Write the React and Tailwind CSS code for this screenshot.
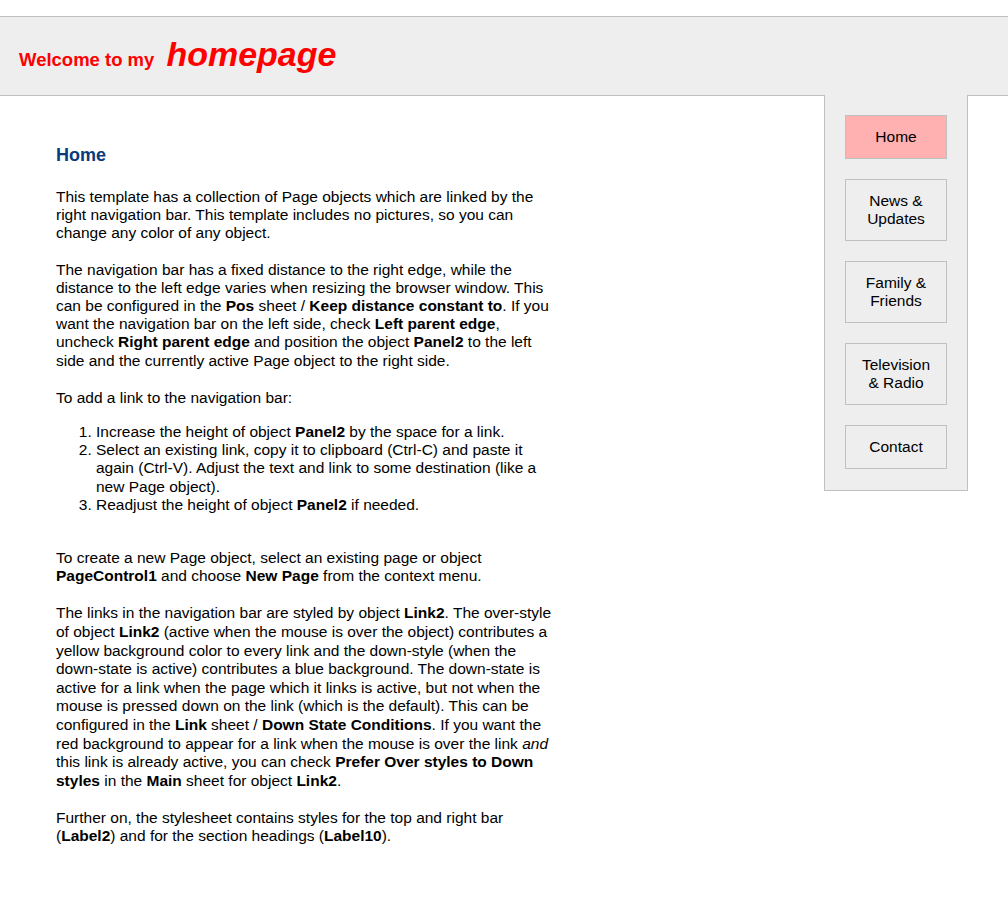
import React from "react";

const navItems = [
  { label: ["Home"], active: true },
  { label: ["News &", "Updates"] },
  { label: ["Family &", "Friends"] },
  { label: ["Television", "& Radio"] },
  { label: ["Contact"] },
];

function NavButton({ label, active }) {
  return (
    <a
      href="#"
      className={`block border border-[#c0c0c0] py-3 text-center leading-[18px] text-black no-underline ${
        active ? "bg-[#ffb0b0]" : "bg-[#eeeeee]"
      }`}
    >
      {label.map((line) => (
        <div key={line}>{line}</div>
      ))}
    </a>
  );
}

export default function App() {
  return (
    <div className="min-h-[920px] bg-white font-['Liberation_Sans',Arial,sans-serif] text-[15.5px] leading-[18.2px] text-black">
      <header className="mt-4 h-20 border-y border-[#c0c0c0] bg-[#eeeeee] pl-[19px] pt-[20px]">
        <div className="flex items-baseline font-bold text-[#ff0000]">
          <span className="text-[18.5px] leading-none">Welcome to my</span>
          <span className="ml-[12px] text-[34px] italic leading-[34px]">homepage</span>
        </div>
      </header>

      <div className="flex justify-between">
        <main className="ml-14 w-[500px] pb-10">
          <h1 className="mt-12 text-[18px] font-bold leading-[22px] text-[#0a3b7c]">Home</h1>

          <p className="mt-[22px]">
            This template has a collection of Page objects which are linked by the right navigation bar. This
            template includes no pictures, so you can change any color of any object.
          </p>

          <p className="mt-[18px]">
            The navigation bar has a fixed distance to the right edge, while the distance to the left edge varies
            when resizing the browser window. This can be configured in the <b>Pos</b> sheet /{" "}
            <b>Keep distance constant to</b>. If you want the navigation bar on the left side, check{" "}
            <b>Left parent edge</b>, uncheck <b>Right parent edge</b> and position the object <b>Panel2</b> to the
            left side and the currently active Page object to the right side.
          </p>

          <p className="mt-[19px]">To add a link to the navigation bar:</p>

          <ol className="mt-4 list-decimal pl-10">
            <li>
              Increase the height of object <b>Panel2</b> by the space for a link.
            </li>
            <li>
              Select an existing link, copy it to clipboard (Ctrl-C) and paste it again (Ctrl-V). Adjust the text
              and link to some destination (like a new Page object).
            </li>
            <li>
              Readjust the height of object <b>Panel2</b> if needed.
            </li>
          </ol>

          <p className="mt-[35px]">
            To create a new Page object, select an existing page or object <b>PageControl1</b> and choose{" "}
            <b>New Page</b> from the context menu.
          </p>

          <p className="mt-[19px] leading-[18.6px]">
            The links in the navigation bar are styled by object <b>Link2</b>. The over-style of object{" "}
            <b>Link2</b> (active when the mouse is over the object) contributes a yellow background color to every
            link and the down-style (when the down-state is active) contributes a blue background. The down-state
            is active for a link when the page which it links is active, but not when the mouse is pressed down on
            the link (which is the default). This can be configured in the <b>Link</b> sheet /{" "}
            <b>Down State Conditions</b>. If you want the red background to appear for a link when the mouse is
            over the link <i>and</i> this link is already active, you can check{" "}
            <b>Prefer Over styles to Down styles</b> in the <b>Main</b> sheet for object <b>Link2</b>.
          </p>

          <p className="mt-[18.4px]">
            Further on, the stylesheet contains styles for the top and right bar (<b>Label2</b>) and for the
            section headings (<b>Label10</b>).
          </p>
        </main>

        <nav className="relative -mt-px mr-10 w-[144px] self-start border-x border-b border-[#c0c0c0] bg-[#eeeeee] px-5 pt-5 pb-[21px]">
          <div className="flex flex-col gap-5">
            {navItems.map((item) => (
              <NavButton key={item.label.join(" ")} label={item.label} active={item.active} />
            ))}
          </div>
        </nav>
      </div>
    </div>
  );
}
